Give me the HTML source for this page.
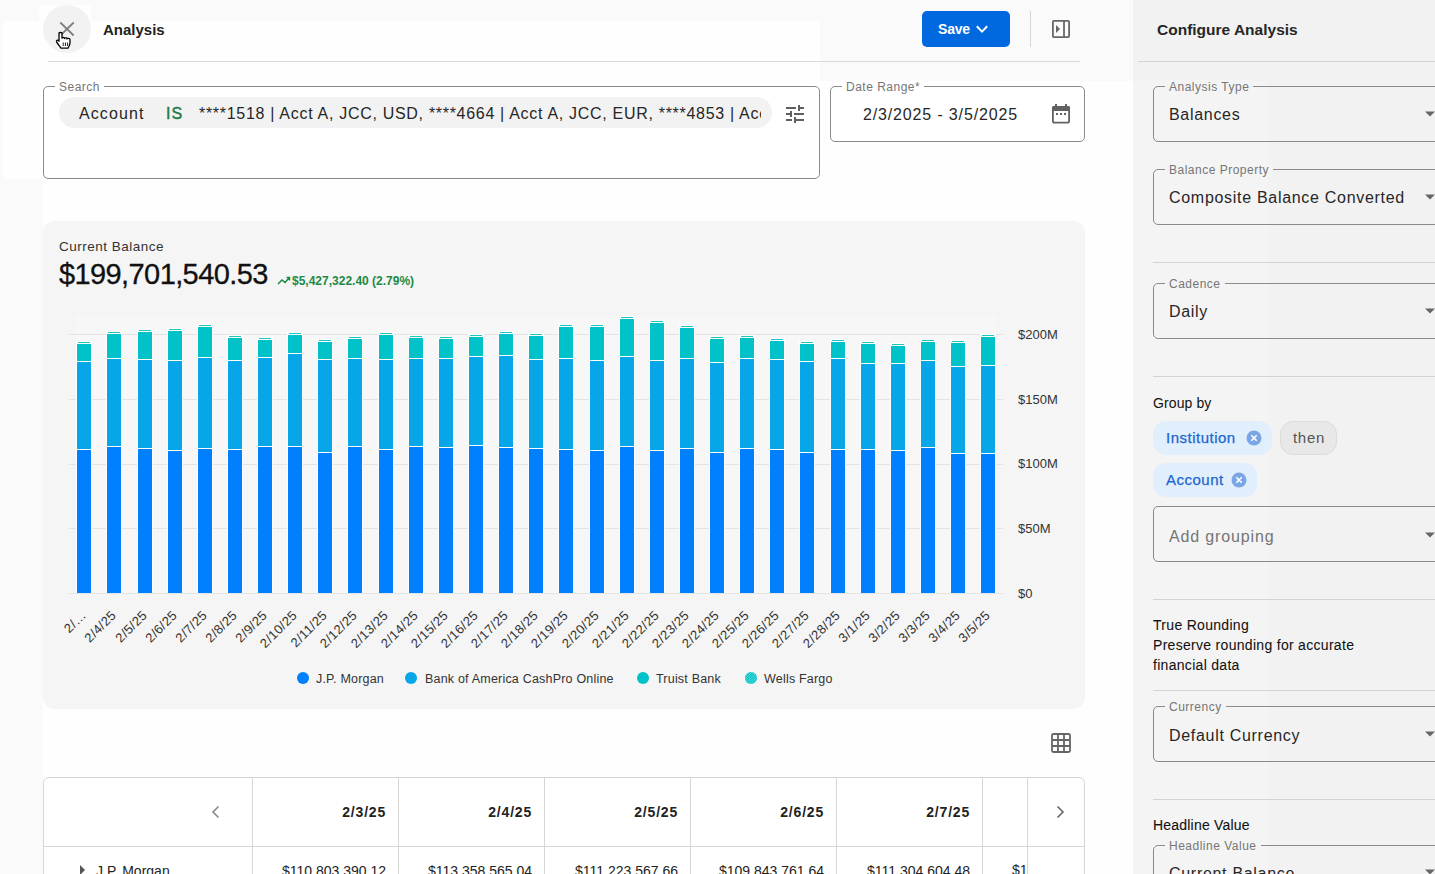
<!DOCTYPE html>
<html><head><meta charset="utf-8">
<style>
*{box-sizing:border-box;margin:0;padding:0}
html,body{width:1435px;height:874px;overflow:hidden;background:#fcfcfc;font-family:"Liberation Sans",sans-serif;color:#1f1f1f}
.abs{position:absolute}
.t{position:absolute;white-space:nowrap;line-height:1}
.field{position:absolute;border:1px solid #8a8a8a;border-radius:5px}
.lbl{position:absolute;top:-7px;font-size:12px;color:#767676;letter-spacing:0.5px;padding:0 4px;line-height:14px;white-space:nowrap}
.val{position:absolute;font-size:16px;letter-spacing:0.7px;color:#262626;white-space:nowrap;line-height:1}
.divh{position:absolute;height:1px;background:#d9d9d9}
</style></head>
<body>
<!-- main background subtle -->
<div class="abs" style="left:0;top:0;width:1133px;height:874px;background:#fefefe"></div>
<div class="abs" style="left:0;top:179px;width:43px;height:695px;background:#fafafa"></div>
<div class="abs" style="left:0;top:21px;width:3px;height:158px;background:#fafafa"></div>
<div class="abs" style="left:0;top:0;width:39px;height:21px;background:#fafafa"></div>
<div class="abs" style="left:39px;top:0;width:52px;height:5px;background:#fafafa"></div>
<div class="abs" style="left:91px;top:0;width:1042px;height:21px;background:#fafafa"></div>
<div class="abs" style="left:820px;top:21px;width:313px;height:60px;background:#fafafa"></div>

<!-- header -->
<div class="abs" style="left:43px;top:5px;width:48px;height:48px;border-radius:50%;background:#f2f2f2"></div>
<svg class="abs" style="left:57px;top:19px" width="20" height="20" viewBox="0 0 20 20"><path d="M3.3 3.5L16.7 16.5M16.7 3.5L3.3 16.5" stroke="#808080" stroke-width="1.8" fill="none"/></svg>
<svg class="abs" style="left:55px;top:31px" width="18" height="19" viewBox="0 0 18 19"><path d="M4,2.5 C4,1 7,1 7,2.5 L7,7.2 C7,6 9.5,6 9.5,7.2 L9.5,7.6 C9.5,6.5 12,6.5 12,7.6 L12,8 C12,7 15,7 15,8.5 L15,12 C15,14 14,15.5 13,17.2 L6,17.2 C5,15.5 3,13.2 1.6,10.8 C1,9.6 2.6,8.6 3.5,9.6 L4,10.2 Z" fill="#fff" stroke="#000" stroke-width="1.3" stroke-linejoin="round"/><path d="M8.2 11.5V15M10.4 11.5V15M12.6 11.5V15" stroke="#000" stroke-width="0.9"/></svg>
<div class="t" style="left:103px;top:22px;font-size:15px;font-weight:bold;color:#222">Analysis</div>

<div class="abs" style="left:922px;top:11px;width:88px;height:36px;border-radius:5px;background:#0069e0"></div>
<div class="t" style="left:938px;top:22px;font-size:14px;font-weight:bold;color:#fff;letter-spacing:-0.2px">Save</div>
<svg class="abs" style="left:975px;top:23px" width="14" height="12" viewBox="0 0 14 12"><path d="M1.8 3.2L7 8.6L12.2 3.2" stroke="#fff" stroke-width="2" fill="none"/></svg>
<div class="abs" style="left:1030px;top:11px;width:1px;height:36px;background:#d6d6d6"></div>
<svg class="abs" style="left:1051px;top:19px" width="20" height="20" viewBox="0 0 20 20"><rect x="1.9" y="1.9" width="16.2" height="16.2" rx="1" stroke="#666" stroke-width="1.8" fill="none"/><path d="M13 2v16" stroke="#666" stroke-width="1.8"/><path d="M5 6L9 10L5 14Z" fill="#666"/></svg>
<div class="divh" style="left:48px;top:61px;width:1032px"></div>

<!-- search -->
<div class="field" style="left:43px;top:86px;width:777px;height:93px;background:#fff">
  <div class="lbl" style="left:11px;background:#fff">Search</div>
</div>
<div class="abs" style="left:59px;top:97px;width:713px;height:31px;border-radius:16px;background:#f2f2f2"></div>
<div class="val" style="left:79px;top:106px;letter-spacing:1.1px">Account</div>
<div class="val" style="left:166px;top:106px;color:#1e7d45;-webkit-text-stroke:0.45px #1e7d45;letter-spacing:1px">IS</div>
<div class="abs" style="left:199px;top:97px;width:562px;height:31px;overflow:hidden"><div class="val" style="left:0;top:9px;">****1518 | Acct A, JCC, USD, ****4664 | Acct A, JCC, EUR, ****4853 | Acct A</div></div>
<svg class="abs" style="left:780px;top:98px" width="32" height="32" viewBox="0 0 32 32" fill="#5f5f5f"><rect x="6" y="9" width="10" height="2"/><rect x="18" y="7" width="2" height="6"/><rect x="20" y="9" width="4" height="2"/><rect x="6" y="15" width="5" height="2"/><rect x="10" y="13" width="2" height="6"/><rect x="14" y="15" width="10" height="2"/><rect x="6" y="21" width="6" height="2"/><rect x="14" y="19" width="2" height="6"/><rect x="16" y="21" width="8" height="2"/></svg>

<!-- date range -->
<div class="field" style="left:830px;top:86px;width:255px;height:56px;background:#fff">
  <div class="lbl" style="left:11px;background:#fff">Date Range*</div>
</div>
<div class="val" style="left:863px;top:107px;letter-spacing:0.85px">2/3/2025 - 3/5/2025</div>
<svg class="abs" style="left:1045px;top:98px" width="32" height="32" viewBox="0 0 32 32" fill="#626262"><rect x="7.9" y="8.9" width="16.2" height="15.8" rx="1.8" fill="none" stroke="#626262" stroke-width="1.8"/><rect x="7" y="8" width="18" height="5" rx="1.5"/><rect x="10" y="6" width="2" height="3"/><rect x="20" y="6" width="2" height="3"/><rect x="11" y="15" width="2" height="2"/><rect x="15" y="15" width="2" height="2"/><rect x="19" y="15" width="2" height="2"/></svg>

<!-- chart card -->
<div class="abs" style="left:43px;top:221px;width:1042px;height:488px;border-radius:12px;background:#f5f5f5"></div>
<div class="t" style="left:59px;top:240px;font-size:13.5px;letter-spacing:0.5px;color:#333">Current Balance</div>
<div class="t" style="left:59px;top:260px;font-size:29px;color:#111;letter-spacing:-0.6px;-webkit-text-stroke:0.3px #111">$199,701,540.53</div>
<svg class="abs" style="left:277px;top:274px" width="14" height="12" viewBox="0 0 14 12"><path d="M1 10L5 6L8 8.5L12.5 3.5M9.5 3.5H12.5V6.5" stroke="#1c8a47" stroke-width="1.5" fill="none"/></svg>
<div class="t" style="left:292px;top:275px;font-size:12px;font-weight:bold;color:#1c8a47">$5,427,322.40 (2.79%)</div>

<svg class="abs" style="left:0;top:0" width="1435" height="874" viewBox="0 0 1435 874">
<rect x="76" y="316" width="920" height="278" fill="#f7f7f7"/>
<rect x="69" y="334" width="934" height="1" fill="#e4e4e4"/>
<rect x="69" y="399" width="934" height="1" fill="#e4e4e4"/>
<rect x="69" y="464" width="934" height="1" fill="#e4e4e4"/>
<rect x="69" y="528" width="934" height="1" fill="#e4e4e4"/>
<rect x="69" y="593" width="934" height="1" fill="#e4e4e4"/>
<text x="1018" y="338.7" font-size="13" fill="#333" font-family="Liberation Sans">$200M</text>
<text x="1018" y="403.5" font-size="13" fill="#333" font-family="Liberation Sans">$150M</text>
<text x="1018" y="468.3" font-size="13" fill="#333" font-family="Liberation Sans">$100M</text>
<text x="1018" y="533.1" font-size="13" fill="#333" font-family="Liberation Sans">$50M</text>
<text x="1018" y="597.9" font-size="13" fill="#333" font-family="Liberation Sans">$0</text>
<rect x="76" y="341" width="16" height="252" fill="#fff" fill-opacity="0.9"/>
<rect x="77" y="450" width="14" height="143" fill="#0080ff"/>
<rect x="77" y="362" width="14" height="87" fill="#06a6e8"/>
<rect x="77" y="344" width="14" height="17" fill="#00c2c8"/>
<rect x="78" y="342" width="12" height="1" fill="#1dc4c4"/>
<text x="87.0" y="616" font-size="13" letter-spacing="0.4" fill="#333" font-family="Liberation Sans" text-anchor="end" transform="rotate(-45 87.0 616)">2/…</text>
<rect x="106" y="331" width="16" height="262" fill="#fff" fill-opacity="0.9"/>
<rect x="107" y="447" width="14" height="146" fill="#0080ff"/>
<rect x="107" y="359" width="14" height="87" fill="#06a6e8"/>
<rect x="107" y="334" width="14" height="24" fill="#00c2c8"/>
<rect x="108" y="332" width="12" height="1" fill="#1dc4c4"/>
<text x="117.0" y="616" font-size="13" letter-spacing="0.4" fill="#333" font-family="Liberation Sans" text-anchor="end" transform="rotate(-45 117.0 616)">2/4/25</text>
<rect x="137" y="329" width="16" height="264" fill="#fff" fill-opacity="0.9"/>
<rect x="138" y="449" width="14" height="144" fill="#0080ff"/>
<rect x="138" y="360" width="14" height="88" fill="#06a6e8"/>
<rect x="138" y="332" width="14" height="27" fill="#00c2c8"/>
<rect x="139" y="330" width="12" height="1" fill="#1dc4c4"/>
<text x="148.0" y="616" font-size="13" letter-spacing="0.4" fill="#333" font-family="Liberation Sans" text-anchor="end" transform="rotate(-45 148.0 616)">2/5/25</text>
<rect x="167" y="328" width="16" height="265" fill="#fff" fill-opacity="0.9"/>
<rect x="168" y="451" width="14" height="142" fill="#0080ff"/>
<rect x="168" y="361" width="14" height="89" fill="#06a6e8"/>
<rect x="168" y="331" width="14" height="29" fill="#00c2c8"/>
<rect x="169" y="329" width="12" height="1" fill="#1dc4c4"/>
<text x="178.0" y="616" font-size="13" letter-spacing="0.4" fill="#333" font-family="Liberation Sans" text-anchor="end" transform="rotate(-45 178.0 616)">2/6/25</text>
<rect x="197" y="324" width="16" height="269" fill="#fff" fill-opacity="0.9"/>
<rect x="198" y="449" width="14" height="144" fill="#0080ff"/>
<rect x="198" y="358" width="14" height="90" fill="#06a6e8"/>
<rect x="198" y="327" width="14" height="30" fill="#00c2c8"/>
<rect x="199" y="325" width="12" height="1" fill="#1dc4c4"/>
<text x="208.0" y="616" font-size="13" letter-spacing="0.4" fill="#333" font-family="Liberation Sans" text-anchor="end" transform="rotate(-45 208.0 616)">2/7/25</text>
<rect x="227" y="335" width="16" height="258" fill="#fff" fill-opacity="0.9"/>
<rect x="228" y="450" width="14" height="143" fill="#0080ff"/>
<rect x="228" y="361" width="14" height="88" fill="#06a6e8"/>
<rect x="228" y="338" width="14" height="22" fill="#00c2c8"/>
<rect x="229" y="336" width="12" height="1" fill="#1dc4c4"/>
<text x="238.0" y="616" font-size="13" letter-spacing="0.4" fill="#333" font-family="Liberation Sans" text-anchor="end" transform="rotate(-45 238.0 616)">2/8/25</text>
<rect x="257" y="337" width="16" height="256" fill="#fff" fill-opacity="0.9"/>
<rect x="258" y="447" width="14" height="146" fill="#0080ff"/>
<rect x="258" y="358" width="14" height="88" fill="#06a6e8"/>
<rect x="258" y="340" width="14" height="17" fill="#00c2c8"/>
<rect x="259" y="338" width="12" height="1" fill="#1dc4c4"/>
<text x="268.0" y="616" font-size="13" letter-spacing="0.4" fill="#333" font-family="Liberation Sans" text-anchor="end" transform="rotate(-45 268.0 616)">2/9/25</text>
<rect x="287" y="332" width="16" height="261" fill="#fff" fill-opacity="0.9"/>
<rect x="288" y="447" width="14" height="146" fill="#0080ff"/>
<rect x="288" y="354" width="14" height="92" fill="#06a6e8"/>
<rect x="288" y="335" width="14" height="18" fill="#00c2c8"/>
<rect x="289" y="333" width="12" height="1" fill="#1dc4c4"/>
<text x="298.0" y="616" font-size="13" letter-spacing="0.4" fill="#333" font-family="Liberation Sans" text-anchor="end" transform="rotate(-45 298.0 616)">2/10/25</text>
<rect x="317" y="339" width="16" height="254" fill="#fff" fill-opacity="0.9"/>
<rect x="318" y="453" width="14" height="140" fill="#0080ff"/>
<rect x="318" y="360" width="14" height="92" fill="#06a6e8"/>
<rect x="318" y="342" width="14" height="17" fill="#00c2c8"/>
<rect x="319" y="340" width="12" height="1" fill="#1dc4c4"/>
<text x="328.0" y="616" font-size="13" letter-spacing="0.4" fill="#333" font-family="Liberation Sans" text-anchor="end" transform="rotate(-45 328.0 616)">2/11/25</text>
<rect x="347" y="336" width="16" height="257" fill="#fff" fill-opacity="0.9"/>
<rect x="348" y="447" width="14" height="146" fill="#0080ff"/>
<rect x="348" y="359" width="14" height="87" fill="#06a6e8"/>
<rect x="348" y="339" width="14" height="19" fill="#00c2c8"/>
<rect x="349" y="337" width="12" height="1" fill="#1dc4c4"/>
<text x="358.0" y="616" font-size="13" letter-spacing="0.4" fill="#333" font-family="Liberation Sans" text-anchor="end" transform="rotate(-45 358.0 616)">2/12/25</text>
<rect x="378" y="332" width="16" height="261" fill="#fff" fill-opacity="0.9"/>
<rect x="379" y="450" width="14" height="143" fill="#0080ff"/>
<rect x="379" y="360" width="14" height="89" fill="#06a6e8"/>
<rect x="379" y="335" width="14" height="24" fill="#00c2c8"/>
<rect x="380" y="333" width="12" height="1" fill="#1dc4c4"/>
<text x="389.0" y="616" font-size="13" letter-spacing="0.4" fill="#333" font-family="Liberation Sans" text-anchor="end" transform="rotate(-45 389.0 616)">2/13/25</text>
<rect x="408" y="335" width="16" height="258" fill="#fff" fill-opacity="0.9"/>
<rect x="409" y="447" width="14" height="146" fill="#0080ff"/>
<rect x="409" y="359" width="14" height="87" fill="#06a6e8"/>
<rect x="409" y="338" width="14" height="20" fill="#00c2c8"/>
<rect x="410" y="336" width="12" height="1" fill="#1dc4c4"/>
<text x="419.0" y="616" font-size="13" letter-spacing="0.4" fill="#333" font-family="Liberation Sans" text-anchor="end" transform="rotate(-45 419.0 616)">2/14/25</text>
<rect x="438" y="336" width="16" height="257" fill="#fff" fill-opacity="0.9"/>
<rect x="439" y="448" width="14" height="145" fill="#0080ff"/>
<rect x="439" y="359" width="14" height="88" fill="#06a6e8"/>
<rect x="439" y="339" width="14" height="19" fill="#00c2c8"/>
<rect x="440" y="337" width="12" height="1" fill="#1dc4c4"/>
<text x="449.0" y="616" font-size="13" letter-spacing="0.4" fill="#333" font-family="Liberation Sans" text-anchor="end" transform="rotate(-45 449.0 616)">2/15/25</text>
<rect x="468" y="334" width="16" height="259" fill="#fff" fill-opacity="0.9"/>
<rect x="469" y="446" width="14" height="147" fill="#0080ff"/>
<rect x="469" y="357" width="14" height="88" fill="#06a6e8"/>
<rect x="469" y="337" width="14" height="19" fill="#00c2c8"/>
<rect x="470" y="335" width="12" height="1" fill="#1dc4c4"/>
<text x="479.0" y="616" font-size="13" letter-spacing="0.4" fill="#333" font-family="Liberation Sans" text-anchor="end" transform="rotate(-45 479.0 616)">2/16/25</text>
<rect x="498" y="331" width="16" height="262" fill="#fff" fill-opacity="0.9"/>
<rect x="499" y="448" width="14" height="145" fill="#0080ff"/>
<rect x="499" y="356" width="14" height="91" fill="#06a6e8"/>
<rect x="499" y="334" width="14" height="21" fill="#00c2c8"/>
<rect x="500" y="332" width="12" height="1" fill="#1dc4c4"/>
<text x="509.0" y="616" font-size="13" letter-spacing="0.4" fill="#333" font-family="Liberation Sans" text-anchor="end" transform="rotate(-45 509.0 616)">2/17/25</text>
<rect x="528" y="333" width="16" height="260" fill="#fff" fill-opacity="0.9"/>
<rect x="529" y="449" width="14" height="144" fill="#0080ff"/>
<rect x="529" y="360" width="14" height="88" fill="#06a6e8"/>
<rect x="529" y="336" width="14" height="23" fill="#00c2c8"/>
<rect x="530" y="334" width="12" height="1" fill="#1dc4c4"/>
<text x="539.0" y="616" font-size="13" letter-spacing="0.4" fill="#333" font-family="Liberation Sans" text-anchor="end" transform="rotate(-45 539.0 616)">2/18/25</text>
<rect x="558" y="324" width="16" height="269" fill="#fff" fill-opacity="0.9"/>
<rect x="559" y="450" width="14" height="143" fill="#0080ff"/>
<rect x="559" y="359" width="14" height="90" fill="#06a6e8"/>
<rect x="559" y="327" width="14" height="31" fill="#00c2c8"/>
<rect x="560" y="325" width="12" height="1" fill="#1dc4c4"/>
<text x="569.0" y="616" font-size="13" letter-spacing="0.4" fill="#333" font-family="Liberation Sans" text-anchor="end" transform="rotate(-45 569.0 616)">2/19/25</text>
<rect x="589" y="324" width="16" height="269" fill="#fff" fill-opacity="0.9"/>
<rect x="590" y="451" width="14" height="142" fill="#0080ff"/>
<rect x="590" y="361" width="14" height="89" fill="#06a6e8"/>
<rect x="590" y="327" width="14" height="33" fill="#00c2c8"/>
<rect x="591" y="325" width="12" height="1" fill="#1dc4c4"/>
<text x="600.0" y="616" font-size="13" letter-spacing="0.4" fill="#333" font-family="Liberation Sans" text-anchor="end" transform="rotate(-45 600.0 616)">2/20/25</text>
<rect x="619" y="316" width="16" height="277" fill="#fff" fill-opacity="0.9"/>
<rect x="620" y="447" width="14" height="146" fill="#0080ff"/>
<rect x="620" y="357" width="14" height="89" fill="#06a6e8"/>
<rect x="620" y="319" width="14" height="37" fill="#00c2c8"/>
<rect x="621" y="317" width="12" height="1" fill="#1dc4c4"/>
<text x="630.0" y="616" font-size="13" letter-spacing="0.4" fill="#333" font-family="Liberation Sans" text-anchor="end" transform="rotate(-45 630.0 616)">2/21/25</text>
<rect x="649" y="320" width="16" height="273" fill="#fff" fill-opacity="0.9"/>
<rect x="650" y="451" width="14" height="142" fill="#0080ff"/>
<rect x="650" y="361" width="14" height="89" fill="#06a6e8"/>
<rect x="650" y="323" width="14" height="37" fill="#00c2c8"/>
<rect x="651" y="321" width="12" height="1" fill="#1dc4c4"/>
<text x="660.0" y="616" font-size="13" letter-spacing="0.4" fill="#333" font-family="Liberation Sans" text-anchor="end" transform="rotate(-45 660.0 616)">2/22/25</text>
<rect x="679" y="325" width="16" height="268" fill="#fff" fill-opacity="0.9"/>
<rect x="680" y="449" width="14" height="144" fill="#0080ff"/>
<rect x="680" y="359" width="14" height="89" fill="#06a6e8"/>
<rect x="680" y="328" width="14" height="30" fill="#00c2c8"/>
<rect x="681" y="326" width="12" height="1" fill="#1dc4c4"/>
<text x="690.0" y="616" font-size="13" letter-spacing="0.4" fill="#333" font-family="Liberation Sans" text-anchor="end" transform="rotate(-45 690.0 616)">2/23/25</text>
<rect x="709" y="336" width="16" height="257" fill="#fff" fill-opacity="0.9"/>
<rect x="710" y="453" width="14" height="140" fill="#0080ff"/>
<rect x="710" y="363" width="14" height="89" fill="#06a6e8"/>
<rect x="710" y="339" width="14" height="23" fill="#00c2c8"/>
<rect x="711" y="337" width="12" height="1" fill="#1dc4c4"/>
<text x="720.0" y="616" font-size="13" letter-spacing="0.4" fill="#333" font-family="Liberation Sans" text-anchor="end" transform="rotate(-45 720.0 616)">2/24/25</text>
<rect x="739" y="335" width="16" height="258" fill="#fff" fill-opacity="0.9"/>
<rect x="740" y="449" width="14" height="144" fill="#0080ff"/>
<rect x="740" y="359" width="14" height="89" fill="#06a6e8"/>
<rect x="740" y="338" width="14" height="20" fill="#00c2c8"/>
<rect x="741" y="336" width="12" height="1" fill="#1dc4c4"/>
<text x="750.0" y="616" font-size="13" letter-spacing="0.4" fill="#333" font-family="Liberation Sans" text-anchor="end" transform="rotate(-45 750.0 616)">2/25/25</text>
<rect x="769" y="338" width="16" height="255" fill="#fff" fill-opacity="0.9"/>
<rect x="770" y="450" width="14" height="143" fill="#0080ff"/>
<rect x="770" y="360" width="14" height="89" fill="#06a6e8"/>
<rect x="770" y="341" width="14" height="18" fill="#00c2c8"/>
<rect x="771" y="339" width="12" height="1" fill="#1dc4c4"/>
<text x="780.0" y="616" font-size="13" letter-spacing="0.4" fill="#333" font-family="Liberation Sans" text-anchor="end" transform="rotate(-45 780.0 616)">2/26/25</text>
<rect x="799" y="341" width="16" height="252" fill="#fff" fill-opacity="0.9"/>
<rect x="800" y="453" width="14" height="140" fill="#0080ff"/>
<rect x="800" y="362" width="14" height="90" fill="#06a6e8"/>
<rect x="800" y="344" width="14" height="17" fill="#00c2c8"/>
<rect x="801" y="342" width="12" height="1" fill="#1dc4c4"/>
<text x="810.0" y="616" font-size="13" letter-spacing="0.4" fill="#333" font-family="Liberation Sans" text-anchor="end" transform="rotate(-45 810.0 616)">2/27/25</text>
<rect x="830" y="339" width="16" height="254" fill="#fff" fill-opacity="0.9"/>
<rect x="831" y="450" width="14" height="143" fill="#0080ff"/>
<rect x="831" y="359" width="14" height="90" fill="#06a6e8"/>
<rect x="831" y="342" width="14" height="16" fill="#00c2c8"/>
<rect x="832" y="340" width="12" height="1" fill="#1dc4c4"/>
<text x="841.0" y="616" font-size="13" letter-spacing="0.4" fill="#333" font-family="Liberation Sans" text-anchor="end" transform="rotate(-45 841.0 616)">2/28/25</text>
<rect x="860" y="341" width="16" height="252" fill="#fff" fill-opacity="0.9"/>
<rect x="861" y="450" width="14" height="143" fill="#0080ff"/>
<rect x="861" y="364" width="14" height="85" fill="#06a6e8"/>
<rect x="861" y="344" width="14" height="19" fill="#00c2c8"/>
<rect x="862" y="342" width="12" height="1" fill="#1dc4c4"/>
<text x="871.0" y="616" font-size="13" letter-spacing="0.4" fill="#333" font-family="Liberation Sans" text-anchor="end" transform="rotate(-45 871.0 616)">3/1/25</text>
<rect x="890" y="343" width="16" height="250" fill="#fff" fill-opacity="0.9"/>
<rect x="891" y="451" width="14" height="142" fill="#0080ff"/>
<rect x="891" y="364" width="14" height="86" fill="#06a6e8"/>
<rect x="891" y="346" width="14" height="17" fill="#00c2c8"/>
<rect x="892" y="344" width="12" height="1" fill="#1dc4c4"/>
<text x="901.0" y="616" font-size="13" letter-spacing="0.4" fill="#333" font-family="Liberation Sans" text-anchor="end" transform="rotate(-45 901.0 616)">3/2/25</text>
<rect x="920" y="339" width="16" height="254" fill="#fff" fill-opacity="0.9"/>
<rect x="921" y="448" width="14" height="145" fill="#0080ff"/>
<rect x="921" y="361" width="14" height="86" fill="#06a6e8"/>
<rect x="921" y="342" width="14" height="18" fill="#00c2c8"/>
<rect x="922" y="340" width="12" height="1" fill="#1dc4c4"/>
<text x="931.0" y="616" font-size="13" letter-spacing="0.4" fill="#333" font-family="Liberation Sans" text-anchor="end" transform="rotate(-45 931.0 616)">3/3/25</text>
<rect x="950" y="340" width="16" height="253" fill="#fff" fill-opacity="0.9"/>
<rect x="951" y="454" width="14" height="139" fill="#0080ff"/>
<rect x="951" y="367" width="14" height="86" fill="#06a6e8"/>
<rect x="951" y="343" width="14" height="23" fill="#00c2c8"/>
<rect x="952" y="341" width="12" height="1" fill="#1dc4c4"/>
<text x="961.0" y="616" font-size="13" letter-spacing="0.4" fill="#333" font-family="Liberation Sans" text-anchor="end" transform="rotate(-45 961.0 616)">3/4/25</text>
<rect x="980" y="334" width="16" height="259" fill="#fff" fill-opacity="0.9"/>
<rect x="981" y="454" width="14" height="139" fill="#0080ff"/>
<rect x="981" y="366" width="14" height="87" fill="#06a6e8"/>
<rect x="981" y="337" width="14" height="28" fill="#00c2c8"/>
<rect x="982" y="335" width="12" height="1" fill="#1dc4c4"/>
<text x="991.0" y="616" font-size="13" letter-spacing="0.4" fill="#333" font-family="Liberation Sans" text-anchor="end" transform="rotate(-45 991.0 616)">3/5/25</text>
<circle cx="303" cy="678" r="6" fill="#0080ff"/>
<text x="316" y="682.5" font-size="12.5" letter-spacing="0.2" fill="#333" font-family="Liberation Sans">J.P. Morgan</text>
<circle cx="411" cy="678" r="6" fill="#06a6e8"/>
<text x="425" y="682.5" font-size="12.5" letter-spacing="0.2" fill="#333" font-family="Liberation Sans">Bank of America CashPro Online</text>
<circle cx="643" cy="678" r="6" fill="#00c2c8"/>
<text x="656" y="682.5" font-size="12.5" letter-spacing="0.2" fill="#333" font-family="Liberation Sans">Truist Bank</text>
<circle cx="751" cy="678" r="6" fill="#00c2c8"/>
<path d="M745.33 676.03L749.03 672.33M745.06 678.85L751.85 672.06M745.68 680.77L753.77 672.68M746.76 682.24L755.24 673.76M748.23 683.32L756.32 675.23M750.15 683.94L756.94 677.15M752.97 683.67L756.67 679.97" stroke="#a8ecec" stroke-width="0.6"/>
<text x="764" y="682.5" font-size="12.5" letter-spacing="0.2" fill="#333" font-family="Liberation Sans">Wells Fargo</text>
</svg>

<!-- grid icon -->
<svg class="abs" style="left:1050px;top:732px" width="22" height="22" viewBox="0 0 22 22"><rect x="2" y="2" width="18" height="18" rx="1.5" stroke="#666" stroke-width="1.8" fill="none"/><path d="M8 2v18M14 2v18M2 8h18M2 14h18" stroke="#666" stroke-width="1.8"/></svg>

<!-- table -->
<div class="abs" style="left:43px;top:777px;width:1042px;height:120px;border:1px solid #d6d6d6;border-radius:6px;background:#fff"></div>
<div class="abs" style="left:44px;top:846px;width:1040px;height:1px;background:#d6d6d6"></div>
<div class="abs" style="left:252px;top:778px;width:1px;height:96px;background:#d6d6d6"></div>
<div class="abs" style="left:398px;top:778px;width:1px;height:96px;background:#d6d6d6"></div>
<div class="abs" style="left:544px;top:778px;width:1px;height:96px;background:#d6d6d6"></div>
<div class="abs" style="left:690px;top:778px;width:1px;height:96px;background:#d6d6d6"></div>
<div class="abs" style="left:836px;top:778px;width:1px;height:96px;background:#d6d6d6"></div>
<div class="abs" style="left:982px;top:778px;width:1px;height:96px;background:#d6d6d6"></div>
<div class="abs" style="left:1027px;top:778px;width:1px;height:96px;background:#d6d6d6"></div>
<svg class="abs" style="left:209px;top:805px" width="14" height="14" viewBox="0 0 14 14"><path d="M9.5 1.5L4 7L9.5 12.5" stroke="#8a8a8a" stroke-width="1.6" fill="none"/></svg>
<svg class="abs" style="left:1053px;top:805px" width="14" height="14" viewBox="0 0 14 14"><path d="M4.5 1.5L10 7L4.5 12.5" stroke="#666" stroke-width="1.6" fill="none"/></svg>
<div class="t" style="right:1049px;top:805px;font-size:14px;font-weight:bold;color:#222;letter-spacing:0.8px">2/3/25</div>
<div class="t" style="right:903px;top:805px;font-size:14px;font-weight:bold;color:#222;letter-spacing:0.8px">2/4/25</div>
<div class="t" style="right:757px;top:805px;font-size:14px;font-weight:bold;color:#222;letter-spacing:0.8px">2/5/25</div>
<div class="t" style="right:611px;top:805px;font-size:14px;font-weight:bold;color:#222;letter-spacing:0.8px">2/6/25</div>
<div class="t" style="right:465px;top:805px;font-size:14px;font-weight:bold;color:#222;letter-spacing:0.8px">2/7/25</div>
<svg class="abs" style="left:78px;top:864px" width="10" height="12" viewBox="0 0 10 12"><path d="M2 1L7 6L2 11Z" fill="#555"/></svg>
<div class="t" style="left:96px;top:864px;font-size:14px;color:#222">J.P. Morgan</div>
<div class="t" style="right:1049px;top:864px;font-size:14px;color:#222">$110,803,390.12</div>
<div class="t" style="right:903px;top:864px;font-size:14px;color:#222">$113,358,565.04</div>
<div class="t" style="right:757px;top:864px;font-size:14px;color:#222">$111,223,567.66</div>
<div class="t" style="right:611px;top:864px;font-size:14px;color:#222">$109,843,761.64</div>
<div class="t" style="right:465px;top:864px;font-size:14px;color:#222">$111,304,604.48</div>
<div class="abs" style="left:983px;top:847px;width:44px;height:27px;overflow:hidden"><div class="t" style="left:29px;top:16px;font-size:14px;color:#222">$1</div></div>

<!-- right panel -->
<div class="abs" style="left:1133px;top:0;width:302px;height:874px;background:#f2f2f2"></div>
<div class="abs" style="left:1133px;top:81px;width:135px;height:793px;background:#f4f4f4"></div>
<div class="t" style="left:1157px;top:22px;font-size:15.5px;font-weight:bold;color:#262626">Configure Analysis</div>
<div class="divh" style="left:1138px;top:61px;width:297px;background:#d4d4d4"></div>

<div class="field" style="left:1153px;top:86px;width:300px;height:56px">
  <div class="lbl" style="left:11px;background:#f4f4f4">Analysis Type</div>
</div>
<div class="val" style="left:1169px;top:107px">Balances</div>
<svg class="abs" style="left:1424px;top:110px" width="12" height="8" viewBox="0 0 12 8"><path d="M1 1.5H11L6 6.5Z" fill="#666"/></svg>

<div class="field" style="left:1153px;top:169px;width:300px;height:56px">
  <div class="lbl" style="left:11px;background:#f4f4f4">Balance Property</div>
</div>
<div class="val" style="left:1169px;top:190px">Composite Balance Converted</div>
<svg class="abs" style="left:1424px;top:193px" width="12" height="8" viewBox="0 0 12 8"><path d="M1 1.5H11L6 6.5Z" fill="#666"/></svg>

<div class="divh" style="left:1153px;top:262px;width:282px;background:#d4d4d4"></div>

<div class="field" style="left:1153px;top:283px;width:300px;height:56px">
  <div class="lbl" style="left:11px;background:#f4f4f4">Cadence</div>
</div>
<div class="val" style="left:1169px;top:304px">Daily</div>
<svg class="abs" style="left:1424px;top:307px" width="12" height="8" viewBox="0 0 12 8"><path d="M1 1.5H11L6 6.5Z" fill="#666"/></svg>

<div class="divh" style="left:1153px;top:376px;width:282px;background:#d4d4d4"></div>
<div class="t" style="left:1153px;top:396px;font-size:14px;color:#111;letter-spacing:0.1px;-webkit-text-stroke:0px #111">Group by</div>

<div class="abs" style="left:1153px;top:421px;width:119px;height:34px;border-radius:13px;background:#e1eefc"></div>
<div class="t" style="left:1166px;top:430px;font-size:15px;color:#1a66d0;letter-spacing:0.5px;-webkit-text-stroke:0.25px #1a66d0">Institution</div>
<svg class="abs" style="left:1246px;top:430px" width="16" height="16" viewBox="0 0 16 16"><circle cx="8" cy="8" r="7.5" fill="#7aa6e6"/><path d="M5.3 5.3L10.7 10.7M10.7 5.3L5.3 10.7" stroke="#fff" stroke-width="1.6"/></svg>
<div class="abs" style="left:1280px;top:421px;width:57px;height:34px;border-radius:13px;background:#e8e8e8;border:1px solid #dcdcdc"></div>
<div class="t" style="left:1293px;top:430px;font-size:15px;color:#555;letter-spacing:0.7px">then</div>

<div class="abs" style="left:1153px;top:463px;width:104px;height:34px;border-radius:13px;background:#e1eefc"></div>
<div class="t" style="left:1166px;top:472px;font-size:15px;color:#1a66d0;letter-spacing:0.5px;-webkit-text-stroke:0.25px #1a66d0">Account</div>
<svg class="abs" style="left:1231px;top:472px" width="16" height="16" viewBox="0 0 16 16"><circle cx="8" cy="8" r="7.5" fill="#7aa6e6"/><path d="M5.3 5.3L10.7 10.7M10.7 5.3L5.3 10.7" stroke="#fff" stroke-width="1.6"/></svg>

<div class="field" style="left:1153px;top:506px;width:300px;height:56px"></div>
<div class="val" style="left:1169px;top:529px;color:#757575;letter-spacing:0.85px">Add grouping</div>
<svg class="abs" style="left:1424px;top:531px" width="12" height="8" viewBox="0 0 12 8"><path d="M1 1.5H11L6 6.5Z" fill="#666"/></svg>

<div class="divh" style="left:1153px;top:599px;width:282px;background:#d4d4d4"></div>
<div class="t" style="left:1153px;top:618px;font-size:14px;color:#111;letter-spacing:0.3px;-webkit-text-stroke:0.05px #111">True Rounding</div>
<div class="t" style="left:1153px;top:638px;font-size:14px;color:#111;letter-spacing:0.3px;-webkit-text-stroke:0.05px #111">Preserve rounding for accurate</div>
<div class="t" style="left:1153px;top:658px;font-size:14px;color:#111;letter-spacing:0.3px;-webkit-text-stroke:0.05px #111">financial data</div>
<div class="divh" style="left:1153px;top:690px;width:282px;background:#d4d4d4"></div>

<div class="field" style="left:1153px;top:706px;width:300px;height:56px">
  <div class="lbl" style="left:11px;background:#f4f4f4">Currency</div>
</div>
<div class="val" style="left:1169px;top:728px">Default Currency</div>
<svg class="abs" style="left:1424px;top:730px" width="12" height="8" viewBox="0 0 12 8"><path d="M1 1.5H11L6 6.5Z" fill="#666"/></svg>

<div class="divh" style="left:1153px;top:799px;width:282px;background:#d4d4d4"></div>
<div class="t" style="left:1153px;top:818px;font-size:14px;color:#111;letter-spacing:0.2px;-webkit-text-stroke:0.1px #111">Headline Value</div>
<div class="field" style="left:1153px;top:845px;width:300px;height:56px">
  <div class="lbl" style="left:11px;background:#f4f4f4">Headline Value</div>
</div>
<div class="val" style="left:1169px;top:866px">Current Balance</div>
<svg class="abs" style="left:1424px;top:868px" width="12" height="8" viewBox="0 0 12 8"><path d="M1 1.5H11L6 6.5Z" fill="#666"/></svg>
</body></html>
